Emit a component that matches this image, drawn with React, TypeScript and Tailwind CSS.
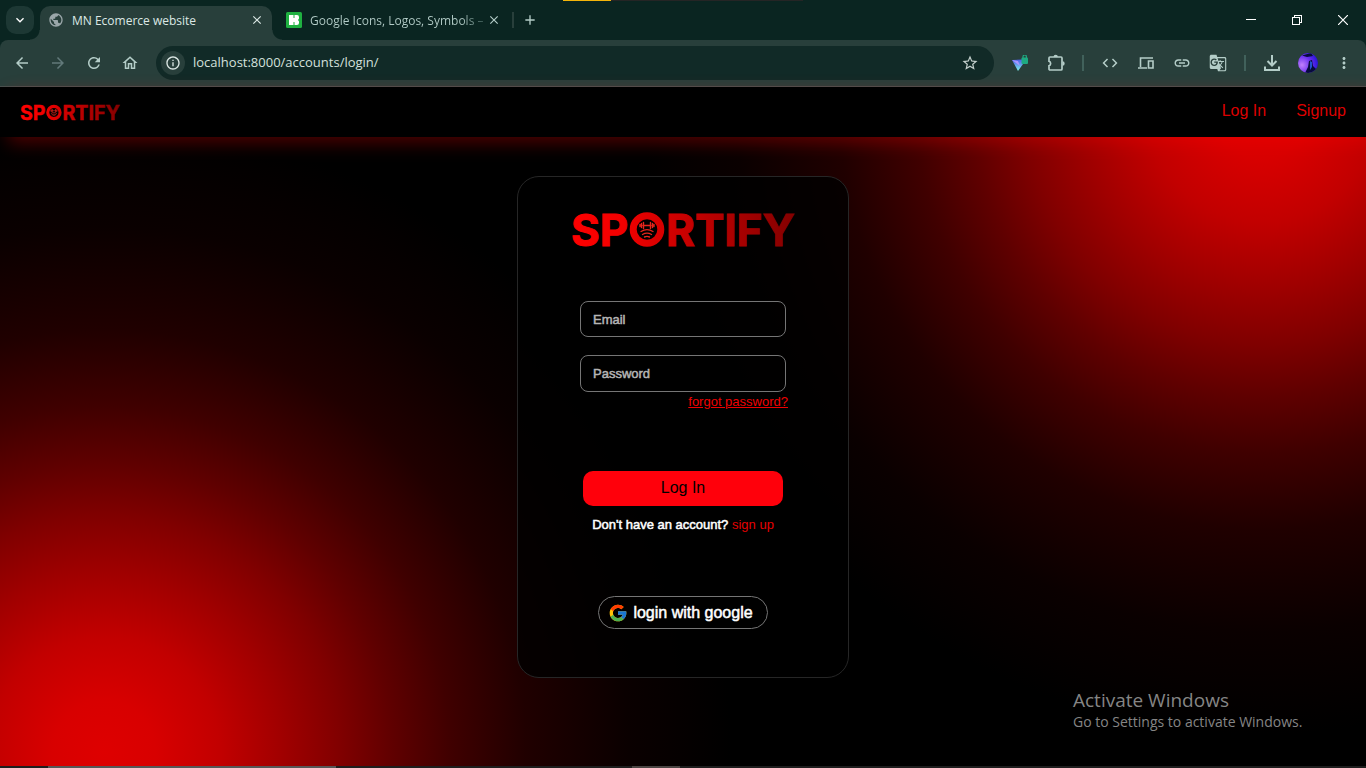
import { useId } from "react";
import type { ReactNode } from "react";
import { FcGoogle } from "react-icons/fc";
import {
  MdArrowBack,
  MdArrowForward,
  MdRefresh,
  MdOutlineHome,
  MdOutlineInfo,
  MdStarBorder,
  MdCode,
  MdLink,
  MdGTranslate,
  MdMoreVert,
  MdPublic,
  MdClose,
  MdAdd,
  MdKeyboardArrowDown,
} from "react-icons/md";

function Logo({ className }: { className: string }) {
  const id = useId();
  return (
    <svg viewBox="0 0 224 37" className={`overflow-visible ${className}`} role="img" aria-label="Sportify">
      <defs>
        <linearGradient id={id} gradientUnits="userSpaceOnUse" x1="0" y1="20" x2="222" y2="12">
          <stop offset="0" stopColor="#ff0000" />
          <stop offset="0.22" stopColor="#f20000" />
          <stop offset="1" stopColor="#850000" />
        </linearGradient>
      </defs>
      <g fill={`url(#${id})`} stroke={`url(#${id})`} strokeWidth="1" fontFamily="Inter, sans-serif" fontWeight="700" fontSize="44">
        <text x="0" y="34.500">SP</text>
        <text x="95" y="34.500">RTIFY</text>
      </g>
      <circle cx="76" cy="18.500" r="13.800" fill="none" stroke={`url(#${id})`} strokeWidth="7" />
      <g fill="none" stroke="#e8251c" strokeWidth="1.400" strokeLinecap="round">
        <path d="M72 14.500h8M70.500 12.500v4M81.500 12.500v4M72.500 11.500v6M79.500 11.500v6M69 13.500v2M83 13.500v2" />
        <path d="M70 20.500c4-2.500 8-2.500 12 0M71.500 23.500c3-1.800 6-1.800 9 0M73.500 26c2-1 3-1 5 0" />
      </g>
    </svg>
  );
}

function IconButton({ label, className = "", children }: { label: string; className?: string; children: ReactNode }) {
  return (
    <button type="button" aria-label={label} className={`flex h-9 w-9 shrink-0 items-center justify-center text-[18px] ${className}`}>
      {children}
    </button>
  );
}

function TabStrip() {
  return (
    <div className="flex h-10 shrink-0 items-center bg-[#0a2521] text-xs text-[#b4cdc8]">
      <button type="button" aria-label="Search tabs" className="ml-1.5 flex h-7 w-7 items-center justify-center rounded-[10px] bg-[#1d3834] text-base text-white">
        <MdKeyboardArrowDown />
      </button>
      <div className="relative ml-1.5 flex h-[34px] w-[232px] items-center self-end rounded-t-[10px] bg-[#283f3b] px-2 pb-1.5 text-[#dce8e5]">
        <span className="absolute -left-2.5 bottom-0 h-2.5 w-2.5 bg-[radial-gradient(circle_at_0_0,transparent_9px,#283f3b_10px)]" />
        <span className="absolute -right-2.5 bottom-0 h-2.5 w-2.5 bg-[radial-gradient(circle_at_100%_0,transparent_9px,#283f3b_10px)]" />
        <MdPublic className="mr-2 h-4 w-4 text-[#9aa6a9]" />
        <span className="grow pt-0.5">MN Ecomerce website</span>
        <button type="button" aria-label="Close tab"><MdClose className="h-3.5 w-3.5" /></button>
      </div>
      <div className="flex h-[34px] w-[240px] items-center self-end pb-1.5 pl-3.5 pr-[11px]">
        <svg viewBox="0 0 16 16" className="mr-2 h-4 w-4 shrink-0" aria-hidden="true">
          <rect width="16" height="16" rx="1.500" fill="#1fb141" />
          <path d="M3 3h4.500v10H3zM7 6h2v4H7zM8.500 3H11a2 2 0 0 1 2 2v1.500L12 8l1 1.500V11a2 2 0 0 1-2 2H8.500z" fill="#fff" />
        </svg>
        <span className="grow whitespace-nowrap bg-linear-to-r from-[#b4cdc8] from-85% to-[#2a4a45] bg-clip-text pt-0.5 text-transparent">Google Icons, Logos, Symbols –</span>
        <button type="button" aria-label="Close tab"><MdClose className="h-3.5 w-3.5" /></button>
      </div>
      <div className="h-4 w-0.5 bg-[#283f3b]" />
      <button type="button" aria-label="New tab" className="ml-2"><MdAdd className="h-4 w-4" /></button>
      <div className="grow" />
      <div className="flex h-10 items-center text-white">
        <button type="button" aria-label="Minimize" className="flex w-[46px] justify-center">
          <svg viewBox="0 0 10 10" className="h-2.5 w-2.5"><path d="M0 4.500h10" stroke="currentColor" shapeRendering="crispEdges" /></svg>
        </button>
        <button type="button" aria-label="Restore" className="flex w-[46px] justify-center">
          <svg viewBox="0 0 10 10" className="h-2.5 w-2.5" fill="none" stroke="currentColor" shapeRendering="crispEdges"><path d="M.5 2.500h7v7h-7zM2.500 2.500v-2h7v7h-2" /></svg>
        </button>
        <button type="button" aria-label="Close" className="flex w-[46px] justify-center">
          <svg viewBox="0 0 10 10" className="h-2.5 w-2.5"><path d="M0 0l10 10M10 0L0 10" stroke="currentColor" strokeWidth="1.200" /></svg>
        </button>
      </div>
    </div>
  );
}

function Toolbar() {
  return (
    <div className="flex h-[47px] shrink-0 items-center rounded-t-lg border-b border-[#46514f] bg-[#283f3b] px-1 text-[#b4cdc8]">
      <IconButton label="Back"><MdArrowBack /></IconButton>
      <IconButton label="Forward" className="text-[#62797a]"><MdArrowForward /></IconButton>
      <IconButton label="Reload"><MdRefresh /></IconButton>
      <IconButton label="Home"><MdOutlineHome /></IconButton>
      <div className="ml-2 flex h-[34px] grow items-center rounded-full bg-[#112a27] pl-[5px] pr-[15px]">
        <button type="button" aria-label="Site information" className="flex h-6 w-6 items-center justify-center rounded-full bg-[#283f3b] text-base text-[#dce8e5]"><MdOutlineInfo /></button>
        <input aria-label="Address" defaultValue="localhost:8000/accounts/login/" className="ml-2 min-w-0 grow bg-transparent text-[13px] text-[#d4e0dd] outline-none" />
        <button type="button" aria-label="Bookmark" className="text-[18px] text-[#c4d0cd]"><MdStarBorder /></button>
      </div>
      <IconButton label="VPN" className="ml-2">
        <svg viewBox="0 0 16 16" className="h-4 w-4">
          <defs><linearGradient id="vpn" x2="0" y2="1"><stop stopColor="#4d5be8" /><stop offset="1" stopColor="#7ff5ee" /></linearGradient></defs>
          <path d="M0 5l10-.5L11 9l-5 7z" fill="url(#vpn)" />
          <path d="M0 5l6 1 2 5z" fill="#a896ff" />
          <rect x="9.500" y="2.500" width="6.500" height="6.500" rx="1" fill="#1eaa82" />
          <path d="M11 3V1.700a1.700 1.700 0 0 1 3.400 0V3" fill="none" stroke="#1eaa82" strokeWidth="1.200" />
        </svg>
      </IconButton>
      <IconButton label="Extensions">
        <svg viewBox="0 0 18 18" className="h-[18px] w-[18px]">
          <path d="M2 4a1 1 0 0 1 1-1h11a1 1 0 0 1 1 1v11a1 1 0 0 1-1 1H3a1 1 0 0 1-1-1v-3.300a2.300 2.300 0 0 0 0-4.400z" fill="none" stroke="currentColor" strokeWidth="1.700" />
          <path d="M6.500 3a2.200 2.200 0 0 1 4.400 0zM15.500 7.300a2.200 2.200 0 0 1 0 4.400z" fill="currentColor" />
        </svg>
      </IconButton>
      <div className="mx-2 h-4 w-0.5 bg-[#41615b]" />
      <IconButton label="Source"><MdCode /></IconButton>
      <IconButton label="Devices">
        <svg viewBox="0 0 18 18" className="h-[18px] w-[18px]" fill="none" stroke="currentColor" strokeWidth="1.600">
          <path d="M3.500 13V4h12.500M1 14h9M11.500 7h4.500v7h-4.500z" />
        </svg>
      </IconButton>
      <IconButton label="Copy link"><MdLink /></IconButton>
      <IconButton label="Translate"><MdGTranslate /></IconButton>
      <div className="mx-2 h-4 w-0.5 bg-[#41615b]" />
      <IconButton label="Downloads">
        <svg viewBox="0 0 18 18" className="h-[18px] w-[18px]" fill="none" stroke="currentColor" strokeWidth="2"><path d="M9 1v10M4.500 7L9 11.500 13.500 7M2 12.500V16h14v-3.500" /></svg>
      </IconButton>
      <IconButton label="Profile">
        <svg viewBox="0 0 20 20" className="h-5 w-5">
          <defs>
            <clipPath id="avatar"><circle cx="10" cy="10" r="10" /></clipPath>
            <radialGradient id="sky" cx=".2" cy=".6" r=".9"><stop stopColor="#c080fa" /><stop offset=".5" stopColor="#6a30ee" /><stop offset="1" stopColor="#1a0cd8" /></radialGradient>
          </defs>
          <g clipPath="url(#avatar)">
            <path d="M0 0h20v20H0z" fill="url(#sky)" />
            <path d="M4 2.500l9-2.500 2 3-6 1zM19 17l-4-4-1-6-3 1-1 6-3 6h12z" fill="#070b3c" />
            <path d="M12 8l2 1v5l-2 3z" fill="#2054cf" />
          </g>
        </svg>
      </IconButton>
      <IconButton label="Menu"><MdMoreVert /></IconButton>
    </div>
  );
}

const fieldClass =
  "w-full rounded-lg border border-[#757575] bg-transparent px-3 text-[13px] text-white outline-none placeholder:text-[#b5b5b5] [-webkit-text-stroke:0.5px]";

function LoginCard() {
  return (
    <form className="flex w-[332px] flex-col items-center rounded-[22px] border border-[#262626] bg-black/80 pb-12 pt-[34px]" onSubmit={(e) => e.preventDefault()}>
      <Logo className="h-[37px] w-[224px]" />
      <div className="mt-[53px] flex w-[206px] flex-col">
        <input type="email" aria-label="Email" placeholder="Email" className={`h-9 ${fieldClass}`} />
        <input type="password" aria-label="Password" placeholder="Password" className={`mt-[18px] h-[37px] ${fieldClass}`} />
        <a href="#forgot" className="-mr-0.5 mt-0.5 self-end text-[13px] leading-4 text-[#f00000] underline">forgot password?</a>
      </div>
      <button type="submit" className="mt-[61px] h-[35px] w-[200px] rounded-[10px] bg-[#ff000b] pb-0.5 text-base text-black">Log In</button>
      <p className="mt-[11px] text-[13px] leading-4 text-[#e60000]">
        <span className="text-white [-webkit-text-stroke:0.5px]">Don't have an account?</span> <a href="#signup">sign up</a>
      </p>
      <button type="button" className="mt-[63px] flex h-[33px] items-center gap-[5px] rounded-full border border-[#757575] pl-[9px] pr-3.5 text-base text-white [-webkit-text-stroke:0.5px]">
        <FcGoogle className="h-5 w-5" strokeWidth="0" />
        login with google
      </button>
    </form>
  );
}

export default function App() {
  return (
    <div className="relative flex min-h-screen flex-col bg-black font-['Liberation_Sans',Arial,sans-serif]">
      <div className="bg-[#0a2521] font-['Open_Sans','Noto_Sans',sans-serif]">
        <TabStrip />
        <Toolbar />
      </div>
      <header className="z-10 flex h-[50px] shrink-0 items-center justify-between bg-black px-5 shadow-[8px_6px_18px_rgba(255,0,0,0.3)]">
        <Logo className="h-[17px] w-[100px]" />
        <nav className="flex gap-[30px] pb-0.5 text-base text-[#dc0000]">
          <a href="#login">Log In</a>
          <a href="#signup">Signup</a>
        </nav>
      </header>
      <main className="flex grow justify-center bg-[radial-gradient(circle_640px_at_104px_calc(100%-14px),#de0000_0%,#d80000_8%,#c20000_18%,#a00000_28%,#800000_37%,#600000_45%,#400000_54%,#200000_66%,#0a0000_82%,transparent_98%),radial-gradient(circle_640px_at_calc(100%-104px)_-30px,#de0000_0%,#d80000_8%,#c20000_18%,#a00000_28%,#800000_37%,#600000_45%,#400000_54%,#200000_66%,#0a0000_82%,transparent_98%)] pb-[88px] pt-[39px]">
        <LoginCard />
      </main>
      <footer className="flex h-0.5 shrink-0 bg-[#1e1e1e]">
        <div className="ml-12 w-72 bg-[#575757]" />
        <div className="ml-[296px] w-12 bg-[#4b4543]" />
      </footer>
      <div className="absolute left-[563px] top-0 flex h-px w-60 bg-[#252525]">
        <div className="w-12 bg-[#f5b50a]" />
      </div>
      <aside className="absolute bottom-9 right-[57px] w-[236px] font-['Open_Sans','Noto_Sans',sans-serif] text-[#858585]">
        <div className="text-[19px] leading-6">Activate Windows</div>
        <div className="text-sm leading-5">Go to Settings to activate Windows.</div>
      </aside>
    </div>
  );
}
